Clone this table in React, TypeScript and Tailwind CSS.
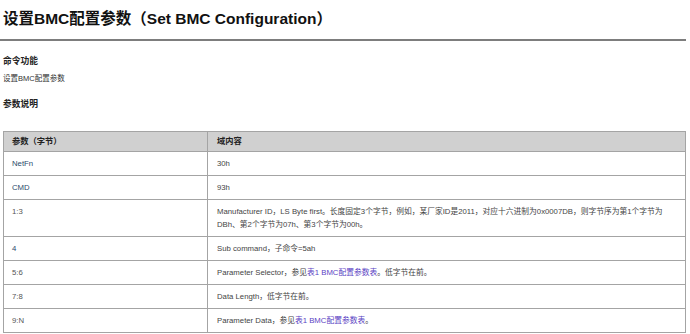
const font = { fontFamily: '"Liberation Sans", "Noto Sans CJK SC", sans-serif' };

const rows: { p: string; d: React.ReactNode; blue?: boolean }[] = [
  { p: "NetFn", d: "30h", blue: true },
  { p: "CMD", d: "93h", blue: true },
  {
    p: "1:3",
    d: (
      <>
        Manufacturer ID，LS Byte first。长度固定3个字节，例如，某厂家ID是2011，对应十六进制为0x0007DB，则字节序为第1个字节为
        <br />
        DBh、第2个字节为07h、第3个字节为00h。
      </>
    ),
  },
  { p: "4", d: "Sub command，子命令=5ah", blue: true },
  {
    p: "5:6",
    d: (
      <>
        Parameter Selector，参见<span className="text-[#5b3fc4]">表1 BMC配置参数表</span>。低字节在前。
      </>
    ),
  },
  { p: "7:8", d: "Data Length，低字节在前。" },
  {
    p: "9:N",
    d: (
      <>
        Parameter Data，参见<span className="text-[#5b3fc4]">表1 BMC配置参数表</span>。
      </>
    ),
  },
];

export default function App() {
  return (
    <div className="w-[690px] h-[334px] bg-white overflow-hidden text-[#333]" style={font}>
      <h1 className="pl-[3px] pt-[9px] text-[15.5px] leading-[20px] font-bold text-[#111]">
        设置BMC配置参数（Set BMC Configuration）
      </h1>
      <div className="mt-[10px] w-[686px] h-[1.5px] bg-[#7d7d7d]" />
      <div className="pl-[3px] mt-[14px] text-[8.75px] leading-[12px] font-bold text-[#222]">命令功能</div>
      <div className="pl-[3px] mt-[6px] text-[7.5px] leading-[12px]">设置BMC配置参数</div>
      <div className="pl-[3px] mt-[13px] text-[8.75px] leading-[12px] font-bold text-[#222]">参数说明</div>
      <table className="ml-[3px] mt-[21px] w-[683px] border-collapse text-[7.75px] leading-[13px]">
        <thead>
          <tr className="bg-[#d0d0d0]">
            <th className="w-[204px] border border-[#a4a4a4] pl-[8px] py-[3px] text-left font-bold text-[8.25px] text-[#222]">参数（字节）</th>
            <th className="border border-[#a4a4a4] pl-[9px] py-[3px] text-left font-bold text-[8.25px] text-[#222]">域内容</th>
          </tr>
        </thead>
        <tbody>
          {rows.map((r) => (
            <tr key={r.p}>
              <td className={"border border-[#a4a4a4] pl-[8px] py-[5px] align-top " + (r.blue ? "text-[#2a4a6b]" : "text-[#555]")}>{r.p}</td>
              <td className="border border-[#a4a4a4] pl-[9px] py-[5px] align-top text-[#444]">{r.d}</td>
            </tr>
          ))}
        </tbody>
      </table>
    </div>
  );
}
